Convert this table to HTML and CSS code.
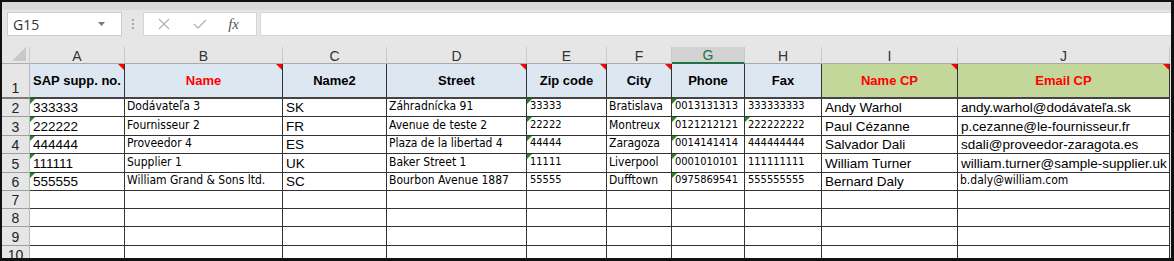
FILE: index.html
```html
<!DOCTYPE html>
<html lang="en">
	<head>
		<meta charset="UTF-8" />
		<title>Suppliers</title>
		<link rel="stylesheet" href="styles.css">
	</head>
	<body>
		<div class="window">
			<div class="formula-bar">
				<div class="name-box">
					<span>G15</span>
					<svg class="caret" width="7" height="4" viewBox="0 0 7 4"><path d="M0 0h7L3.5 4z" fill="#777"/></svg>
				</div>
				<div class="grip"><i></i><i></i><i></i></div>
				<div class="fx-buttons">
					<svg width="14" height="14" viewBox="0 0 14 14"><path d="M2 2l10 10M12 2L2 12" stroke="#b4b4b4" stroke-width="1.3" fill="none"/></svg>
					<svg width="16" height="14" viewBox="0 0 16 14"><path d="M2 7l4 4 8-8" stroke="#b4b4b4" stroke-width="1.4" fill="none"/></svg>
					<span class="fx">fx</span>
				</div>
				<div class="formula-input"></div>
			</div>

			<div class="sheet">
				<!-- column letters -->
				<div class="corner"><svg width="14" height="14" viewBox="0 0 14 14"><path d="M14 0v14H0z" fill="#c8c8c8"/></svg></div>
				<div class="col-head">A</div>
				<div class="col-head">B</div>
				<div class="col-head">C</div>
				<div class="col-head">D</div>
				<div class="col-head">E</div>
				<div class="col-head">F</div>
				<div class="col-head active">G</div>
				<div class="col-head">H</div>
				<div class="col-head">I</div>
				<div class="col-head">J</div>

				<!-- row 1 -->
				<div class="row-head first">1</div>
				<div class="cell hd note">SAP supp. no.</div>
				<div class="cell hd red note">Name</div>
				<div class="cell hd">Name2</div>
				<div class="cell hd note">Street</div>
				<div class="cell hd note">Zip code</div>
				<div class="cell hd note">City</div>
				<div class="cell hd">Phone</div>
				<div class="cell hd">Fax</div>
				<div class="cell hd cp red note">Name CP</div>
				<div class="cell hd cp red note">Email CP</div>

				<!-- row 2 -->
				<div class="row-head">2</div>
				<div class="cell big txt">333333</div>
				<div class="cell sm">Dodávateľa 3</div>
				<div class="cell big">SK</div>
				<div class="cell sm">Záhradnícka 91</div>
				<div class="cell sm num txt">33333</div>
				<div class="cell sm">Bratislava</div>
				<div class="cell sm num txt">0013131313</div>
				<div class="cell sm num">333333333</div>
				<div class="cell big">Andy Warhol</div>
				<div class="cell big">andy.warhol@dodávateľa.sk</div>

				<!-- row 3 -->
				<div class="row-head">3</div>
				<div class="cell big txt">222222</div>
				<div class="cell sm">Fournisseur 2</div>
				<div class="cell big">FR</div>
				<div class="cell sm">Avenue de teste 2</div>
				<div class="cell sm num txt">22222</div>
				<div class="cell sm">Montreux</div>
				<div class="cell sm num txt">0121212121</div>
				<div class="cell sm num txt">222222222</div>
				<div class="cell big">Paul Cézanne</div>
				<div class="cell big">p.cezanne@le-fournisseur.fr</div>

				<!-- row 4 -->
				<div class="row-head">4</div>
				<div class="cell big txt">444444</div>
				<div class="cell sm">Proveedor 4</div>
				<div class="cell big">ES</div>
				<div class="cell sm">Plaza de la libertad 4</div>
				<div class="cell sm num txt">44444</div>
				<div class="cell sm">Zaragoza</div>
				<div class="cell sm num txt">0014141414</div>
				<div class="cell sm num">444444444</div>
				<div class="cell big">Salvador Dali</div>
				<div class="cell big">sdali@proveedor-zaragota.es</div>

				<!-- row 5 -->
				<div class="row-head">5</div>
				<div class="cell big txt">111111</div>
				<div class="cell sm">Supplier 1</div>
				<div class="cell big">UK</div>
				<div class="cell sm">Baker Street 1</div>
				<div class="cell sm num txt">11111</div>
				<div class="cell sm">Liverpool</div>
				<div class="cell sm num txt">0001010101</div>
				<div class="cell sm num">111111111</div>
				<div class="cell big">William Turner</div>
				<div class="cell big">william.turner@sample-supplier.uk</div>

				<!-- row 6 -->
				<div class="row-head">6</div>
				<div class="cell big txt">555555</div>
				<div class="cell sm">William Grand &amp; Sons ltd.</div>
				<div class="cell big">SC</div>
				<div class="cell sm">Bourbon Avenue 1887</div>
				<div class="cell sm num">55555</div>
				<div class="cell sm">Dufftown</div>
				<div class="cell sm num txt">0975869541</div>
				<div class="cell sm num">555555555</div>
				<div class="cell big">Bernard Daly</div>
				<div class="cell sm">b.daly@william.com</div>

				<!-- empty rows -->
				<div class="row-head">7</div>
				<div class="cell"></div><div class="cell"></div><div class="cell"></div><div class="cell"></div><div class="cell"></div>
				<div class="cell"></div><div class="cell"></div><div class="cell"></div><div class="cell"></div><div class="cell"></div>
				<div class="row-head">8</div>
				<div class="cell"></div><div class="cell"></div><div class="cell"></div><div class="cell"></div><div class="cell"></div>
				<div class="cell"></div><div class="cell"></div><div class="cell"></div><div class="cell"></div><div class="cell"></div>
				<div class="row-head">9</div>
				<div class="cell"></div><div class="cell"></div><div class="cell"></div><div class="cell"></div><div class="cell"></div>
				<div class="cell"></div><div class="cell"></div><div class="cell"></div><div class="cell"></div><div class="cell"></div>
				<div class="row-head">10</div>
				<div class="cell"></div><div class="cell"></div><div class="cell"></div><div class="cell"></div><div class="cell"></div>
				<div class="cell"></div><div class="cell"></div><div class="cell"></div><div class="cell"></div><div class="cell"></div>
			</div>
		</div>
	</body>
</html>
```

FILE: styles.css
```css
body {
	margin: 0;
	font-family: "Liberation Sans", Arial, sans-serif;
	background: #fff;
}
.window {
	width: 1174px;
	height: 261px;
	box-sizing: border-box;
	border: 2px solid #111;
	border-right-width: 3px;
	border-bottom-width: 3px;
	background: #e6e6e6;
	overflow: hidden;
}
.formula-bar {
	height: 45px;
	box-sizing: border-box;
	padding: 10px 0 0 5px;
	display: flex;
	align-items: flex-start;
	background: linear-gradient(#dadada 0, #dadada 7px, #e6e6e6 9px);
}
.name-box {
	width: 115px;
	height: 24px;
	box-sizing: border-box;
	background: #fff;
	border: 1px solid #cdcdcd;
	display: flex;
	align-items: center;
	justify-content: space-between;
	padding: 0 16px 0 5px;
	font-family: "Open Sans", "Noto Sans", sans-serif;
	font-size: 14px;
	color: #333;
}
.grip {
	width: 21px;
	height: 24px;
	display: flex;
	flex-direction: column;
	align-items: center;
	justify-content: center;
	gap: 2px;
}
.grip i {
	width: 2px;
	height: 2px;
	background: #a6a6a6;
}
.fx-buttons {
	width: 114px;
	height: 24px;
	box-sizing: border-box;
	background: #fff;
	border: 1px solid #d6d6d6;
	display: flex;
	align-items: center;
	justify-content: space-between;
	padding: 0 17px 0 13px;
}
.fx {
	font-family: "Liberation Serif", serif;
	font-style: italic;
	font-size: 15px;
	color: #555;
}
.formula-input {
	flex: 1;
	height: 24px;
	box-sizing: border-box;
	margin-left: 3px;
	background: #fff;
	border: 1px solid #d6d6d6;
	border-right: none;
}
.sheet {
	display: grid;
	grid-template-columns: 28px 95px 158px 104px 140px 80px 65px 73px 77px 136px 212px;
	grid-template-rows: 17px 35px 18px 19px 18px 19px 18px 18px 18px 19px 18px;
	background: #fff;
	width: 1168px;
}
.corner {
	background: #e6e6e6;
	border-right: 1px solid #c9c9c9;
	border-bottom: 1px solid #ababab;
	display: flex;
	align-items: flex-end;
	justify-content: flex-end;
	padding: 0 3px 2px 0;
}
.col-head {
	background: #e6e6e6;
	border-right: 1px solid #c9c9c9;
	border-bottom: 1px solid #ababab;
	display: flex;
	align-items: center;
	justify-content: center;
	font-size: 14px;
	color: #333;
	padding-top: 1px;
}
.col-head.active {
	background: #d2d2d2;
	color: #217346;
	border-bottom: 2px solid #217346;
}
.row-head {
	background: #e6e6e6;
	border-right: 1px solid #b9b9b9;
	border-bottom: 1px solid #9e9e9e;
	display: flex;
	align-items: flex-end;
	justify-content: center;
	font-size: 14px;
	color: #222;
	line-height: 16px;
}
.row-head.first {
	border-bottom: 2px solid #7a7a7a;
	padding-bottom: 1px;
}
.cell {
	position: relative;
	border-right: 1px solid #333;
	border-bottom: 1px solid #333;
	display: flex;
	align-items: flex-end;
	padding: 0 0 0 2px;
	white-space: nowrap;
	overflow: hidden;
	color: #000;
}
.cell.hd {
	background: #dde7f2;
	justify-content: center;
	align-items: center;
	padding: 0;
	font-weight: bold;
	font-size: 13px;
	border-bottom: 2px solid #444;
}
.cell.hd.cp {
	background: #c4d79b;
}
.cell.red {
	color: #ff0000;
}
.cell.note::after {
	content: "";
	position: absolute;
	top: 0;
	right: 0;
	border-top: 6px solid #f00;
	border-left: 6px solid transparent;
}
.cell.txt::before {
	content: "";
	position: absolute;
	top: 0;
	left: 0;
	border-top: 5px solid #1f8a1f;
	border-right: 5px solid transparent;
}
.cell.big {
	font-size: 13.5px;
	line-height: 15px;
	padding-bottom: 1px;
	padding-left: 3px;
}
.cell.sm {
	font-family: "DejaVu Sans Condensed", "DejaVu Sans", sans-serif;
	font-size: 12px;
	line-height: 14px;
	padding-bottom: 3px;
}
.cell.sm.num {
	font-size: 11px;
	padding-left: 3px;
}
```
